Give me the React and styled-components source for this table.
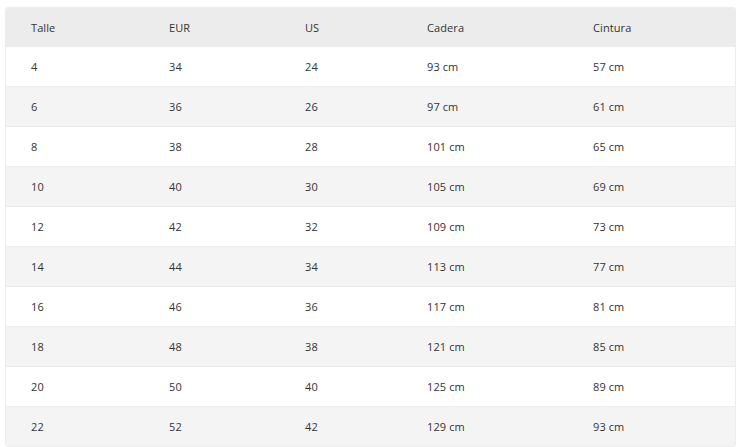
import React from 'react'
import styled, { createGlobalStyle } from 'styled-components'

const GlobalStyle = createGlobalStyle`
  html, body {
    margin: 0;
    padding: 0;
    background: #ffffff;
  }
  body {
    font-family: 'Open Sans', 'Liberation Sans', sans-serif;
  }
`

const Page = styled.div`
  padding: 7px 4px 0 5px;
`

const Table = styled.div`
  width: 731px;
  border: 1px solid #ececec;
  border-radius: 3px;
  overflow: hidden;
  box-sizing: border-box;
`

const Row = styled.div`
  display: grid;
  grid-template-columns: 138px 136px 122px 166px 1fr;
  height: ${(p) => (p.$head ? '38px' : '40px')};
  align-items: center;
  background: ${(p) => (p.$head ? '#ececec' : p.$alt ? '#f4f4f4' : '#ffffff')};
  border-top: ${(p) => (p.$head ? 'none' : '1px solid #ececec')};
  box-sizing: border-box;
`

const Cell = styled.div`
  padding-left: 25px;
  font-size: 11px;
  color: #333333;
  letter-spacing: 0.1px;
`

const sizes = [
  ['4', '34', '24', '93 cm', '57 cm'],
  ['6', '36', '26', '97 cm', '61 cm'],
  ['8', '38', '28', '101 cm', '65 cm'],
  ['10', '40', '30', '105 cm', '69 cm'],
  ['12', '42', '32', '109 cm', '73 cm'],
  ['14', '44', '34', '113 cm', '77 cm'],
  ['16', '46', '36', '117 cm', '81 cm'],
  ['18', '48', '38', '121 cm', '85 cm'],
  ['20', '50', '40', '125 cm', '89 cm'],
  ['22', '52', '42', '129 cm', '93 cm'],
]

const headers = ['Talle', 'EUR', 'US', 'Cadera', 'Cintura']

const App = () => {
  return (
    <Page>
      <GlobalStyle />
      <Table>
        <Row $head>
          {headers.map((h) => (
            <Cell key={h}>{h}</Cell>
          ))}
        </Row>
        {sizes.map((row, i) => (
          <Row key={row[0]} $alt={i % 2 === 1}>
            {row.map((v, j) => (
              <Cell key={j}>{v}</Cell>
            ))}
          </Row>
        ))}
      </Table>
    </Page>
  )
}

export default App
